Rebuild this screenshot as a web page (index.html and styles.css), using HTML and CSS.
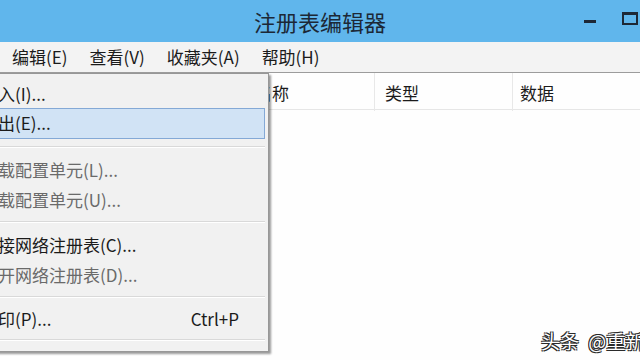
FILE: index.html
```html
<!DOCTYPE html>
<html>
    <head>
        <title>注册表编辑器</title>
        <link rel="stylesheet" href="styles.css">
    </head>
    <body>
        <div class="window">
            <div class="titlebar">
                <span></span>
                <span class="title">注册表编辑器</span>
                <div class="controls">
                    <span class="btn_min"></span>
                    <span class="btn_max"></span>
                </div>
            </div>

            <div class="menubar">
                <span class="menu_item">编辑(E)</span>
                <span class="menu_item">查看(V)</span>
                <span class="menu_item">收藏夹(A)</span>
                <span class="menu_item">帮助(H)</span>
            </div>

            <div class="content">
                <div class="tree"></div>
                <div class="list">
                    <div class="list_head">
                        <div class="col col_name">名称</div>
                        <div class="col col_type">类型</div>
                        <div class="col col_data">数据</div>
                    </div>
                </div>

                <!-- file menu, opened -->
                <div class="dropdown">
                    <div class="drop_item">导入(I)...</div>
                    <div class="drop_item active">导出(E)...</div>
                    <div class="sep"></div>
                    <div class="drop_item disabled">加载配置单元(L)...</div>
                    <div class="drop_item disabled">卸载配置单元(U)...</div>
                    <div class="sep"></div>
                    <div class="drop_item">连接网络注册表(C)...</div>
                    <div class="drop_item disabled">断开网络注册表(D)...</div>
                    <div class="sep"></div>
                    <div class="drop_item short">打印(P)...<span class="shortcut">Ctrl+P</span></div>
                    <div class="sep"></div>
                </div>
            </div>

            <div class="watermark">头条 @重新</div>
        </div>
    </body>
</html>
```

FILE: styles.css
```css
body {
    margin: 0;
    background-color: #ffffff;
    font-family: "Noto Sans CJK SC", "Noto Sans", sans-serif;
    color: #1b1b1b;
    overflow: hidden;
}

.window {
    position: relative;
    width: 640px;
    height: 360px;
    overflow: hidden;
    background-color: #fefefe;
}

.titlebar {
    height: 42px;
    background-color: #60b6ec;
    display: grid;
    grid-template-columns: 1fr auto 1fr;
    align-items: center;
}

.title {
    font-size: 22px;
    color: #1c2836;
    line-height: 1;
    margin-left: 0px;
}

.controls {
    display: flex;
    justify-content: flex-end;
    align-items: center;
    gap: 26px;
    padding-right: 2px;
}

.btn_min {
    width: 12px;
    height: 3px;
    background-color: #1d2836;
}

.btn_max {
    width: 12px;
    height: 8px;
    border: 2px solid #1d2836;
    border-top-width: 3px;
    margin-bottom: 6px;
}

.menubar {
    height: 30px;
    background-color: #f3f3f3;
    border-bottom: 1px solid #9c9c9c;
    display: flex;
    align-items: center;
    padding-left: 1px;
    font-size: 17px;
    color: #1b1b1b;
}

.menu_item {
    padding: 0 11px;
    line-height: 30px;
}

.content {
    position: relative;
    display: grid;
    grid-template-columns: 250px 1fr;
}

.list_head {
    display: grid;
    grid-template-columns: 125px 138px 1fr;
    height: 36px;
    border-bottom: 1px solid #e6e6e6;
    font-size: 17px;
}

.col {
    line-height: 36px;
    padding-top: 2px;
    border-right: 1px solid #e8e8e8;
}

.col_name {
    padding-left: 5px;
}

.col_type {
    padding-left: 10px;
}

.col_data {
    padding-left: 7px;
    border-right: none;
}

.dropdown {
    position: absolute;
    top: 0;
    left: -60px;
    width: 329px;
    height: 279px;
    box-sizing: border-box;
    padding: 4px 3px 0 0;
    background-color: #f1f1f1;
    border: 1px solid #979797;
    box-shadow: 2px 2px 2px rgba(0, 0, 0, 0.4);
    font-size: 17px;
}

.drop_item {
    height: 30px;
    line-height: 30px;
    padding-left: 39px;
    padding-right: 25px;
    display: flex;
    justify-content: space-between;
    box-sizing: border-box;
    border: 1px solid transparent;
}

.drop_item.active {
    background-color: #d1e3f5;
    border-color: #84a9d6;
    line-height: 28px;
    height: 31px;
}

.drop_item.disabled {
    color: #6a6a6a;
}

.drop_item.short {
    height: 28px;
    line-height: 28px;
}

.shortcut {
    color: #1b1b1b;
}

.sep {
    height: 15px;
    margin-left: 40px;
    background: linear-gradient(#f1f1f1 7px, #d9d9d9 7px, #d9d9d9 8px, #ffffff 8px, #ffffff 9px, #f1f1f1 9px);
}

.watermark {
    position: absolute;
    left: 541px;
    bottom: 6px;
    font-size: 19px;
    color: #ffffff;
    word-spacing: 5px;
    text-shadow: 1px 1px 0 #2a2a2a, -1px -1px 0 #2a2a2a, 1px -1px 0 #2a2a2a, -1px 1px 0 #2a2a2a;
    white-space: nowrap;
}
```
